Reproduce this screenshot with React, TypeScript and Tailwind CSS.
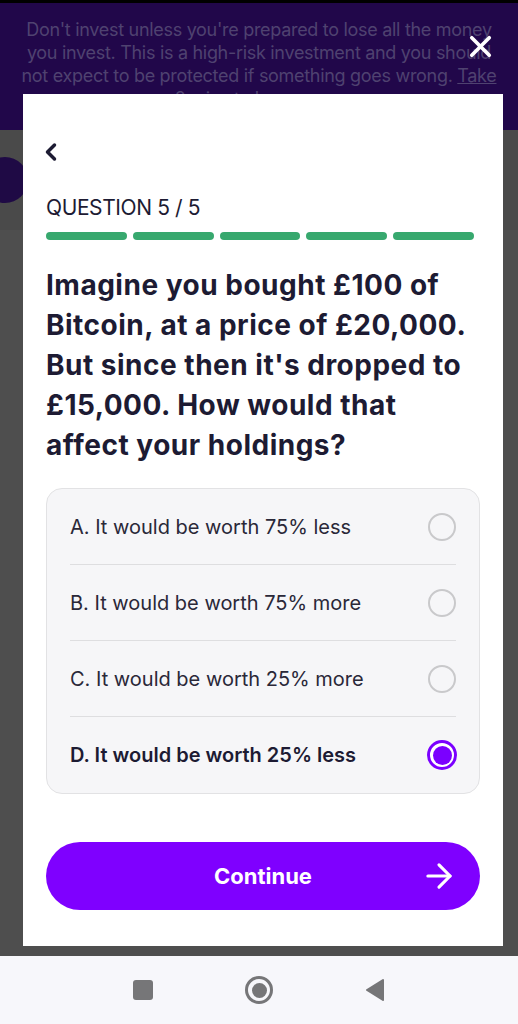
import { ArrowRight, ChevronLeft, X } from "lucide-react";

const options = [
  { label: "A. It would be worth 75% less", selected: false },
  { label: "B. It would be worth 75% more", selected: false },
  { label: "C. It would be worth 25% more", selected: false },
  { label: "D. It would be worth 25% less", selected: true },
];

function Radio({ selected }: { selected: boolean }) {
  if (selected) {
    return (
      <div className="flex h-[30px] w-[30px] items-center justify-center rounded-full border-[3px] border-[#7b00ff] bg-white">
        <div className="h-[19px] w-[19px] rounded-full bg-[#7b00ff]" />
      </div>
    );
  }
  return <div className="h-[28px] w-[28px] rounded-full border-2 border-[#c9c9cb]" />;
}

export default function App() {
  return (
    <div className="relative h-[1024px] w-[518px] overflow-hidden font-['Inter',sans-serif]">
      {/* page behind the dialog, dimmed */}
      <div className="flex h-full flex-col">
        <div className="h-[3px] bg-black" />
        <div className="h-[127px] bg-[#21074a] px-[15px] pt-[15px] text-center text-[18px] leading-[23px] tracking-[-0.3px] text-[#4f4270]">
          Don't invest unless you're prepared to lose all the money you invest. This is a high-risk
          investment and you should not expect to be protected if something goes wrong.{" "}
          <span className="underline">Take 2 mins to learn more</span>
        </div>
        <div className="flex h-[100px] items-center bg-[#4a4a4a]">
          <div className="-ml-[18px] h-[46px] w-[46px] rounded-full bg-[#1f0a45]" />
        </div>
        <div className="flex-1 bg-[#4e4e4e]" />
        <div className="flex h-[68px] items-center justify-center gap-[92px] bg-[#f7f7fb]">
          <div className="h-[20px] w-[20px] rounded-[3px] bg-[#767678]" />
          <div className="flex h-[28px] w-[28px] items-center justify-center rounded-full border-[3px] border-[#767678]">
            <div className="h-[15px] w-[15px] rounded-full bg-[#767678]" />
          </div>
          <svg width="20" height="24" viewBox="0 0 20 24">
            <path d="M18 2 L2 12 L18 22 Z" fill="#767678" stroke="#767678" strokeWidth="2" strokeLinejoin="round" />
          </svg>
        </div>
      </div>

      {/* close button */}
      <button className="absolute left-[463px] top-[29px] text-white">
        <X size={35} strokeWidth={2.5} />
      </button>

      {/* dialog */}
      <div className="absolute left-[23px] top-[94px] flex h-[852px] w-[480px] flex-col bg-white px-[23px] text-[#1d1b33]">
        <div className="mt-[44px] -ml-[9px] h-[28px]">
          <ChevronLeft size={28} strokeWidth={3} />
        </div>
        <div className="mt-[29px] text-[21px] leading-[26px] tracking-[-0.4px]">QUESTION 5 / 5</div>
        <div className="mt-[11px] flex gap-[6px] pr-[6px]">
          {[0, 1, 2, 3, 4].map((i) => (
            <div key={i} className="h-[8px] flex-1 rounded-full bg-[#37a86e]" />
          ))}
        </div>
        <h1 className="mt-[25px] text-[28px] font-bold leading-[40px] tracking-[0.5px]">
          Imagine you bought £100 of Bitcoin, at a price of £20,000. But since then it's dropped to
          £15,000. How would that affect your holdings?
        </h1>
        <div className="mt-[23px] rounded-[16px] border border-[#e2e2e4] bg-[#f6f6f8] px-[23px]">
          {options.map((o, i) => (
            <div
              key={o.label}
              className={`flex h-[76px] items-center justify-between ${i < 3 ? "border-b border-[#dedee0]" : ""}`}
            >
              <span
                className={`text-[20px] ${o.selected ? "font-semibold text-[#1d1b33]" : "text-[#2a2838]"}`}
              >
                {o.label}
              </span>
              <div className="mr-[-1px] flex w-[30px] justify-center">
                <Radio selected={o.selected} />
              </div>
            </div>
          ))}
        </div>
        <button className="relative mt-[48px] flex h-[68px] w-full items-center justify-center rounded-full bg-[#7f00ff] text-white">
          <span className="text-[22px] font-bold">Continue</span>
          <ArrowRight className="absolute right-[22px]" size={38} strokeWidth={2} />
        </button>
      </div>
    </div>
  );
}
